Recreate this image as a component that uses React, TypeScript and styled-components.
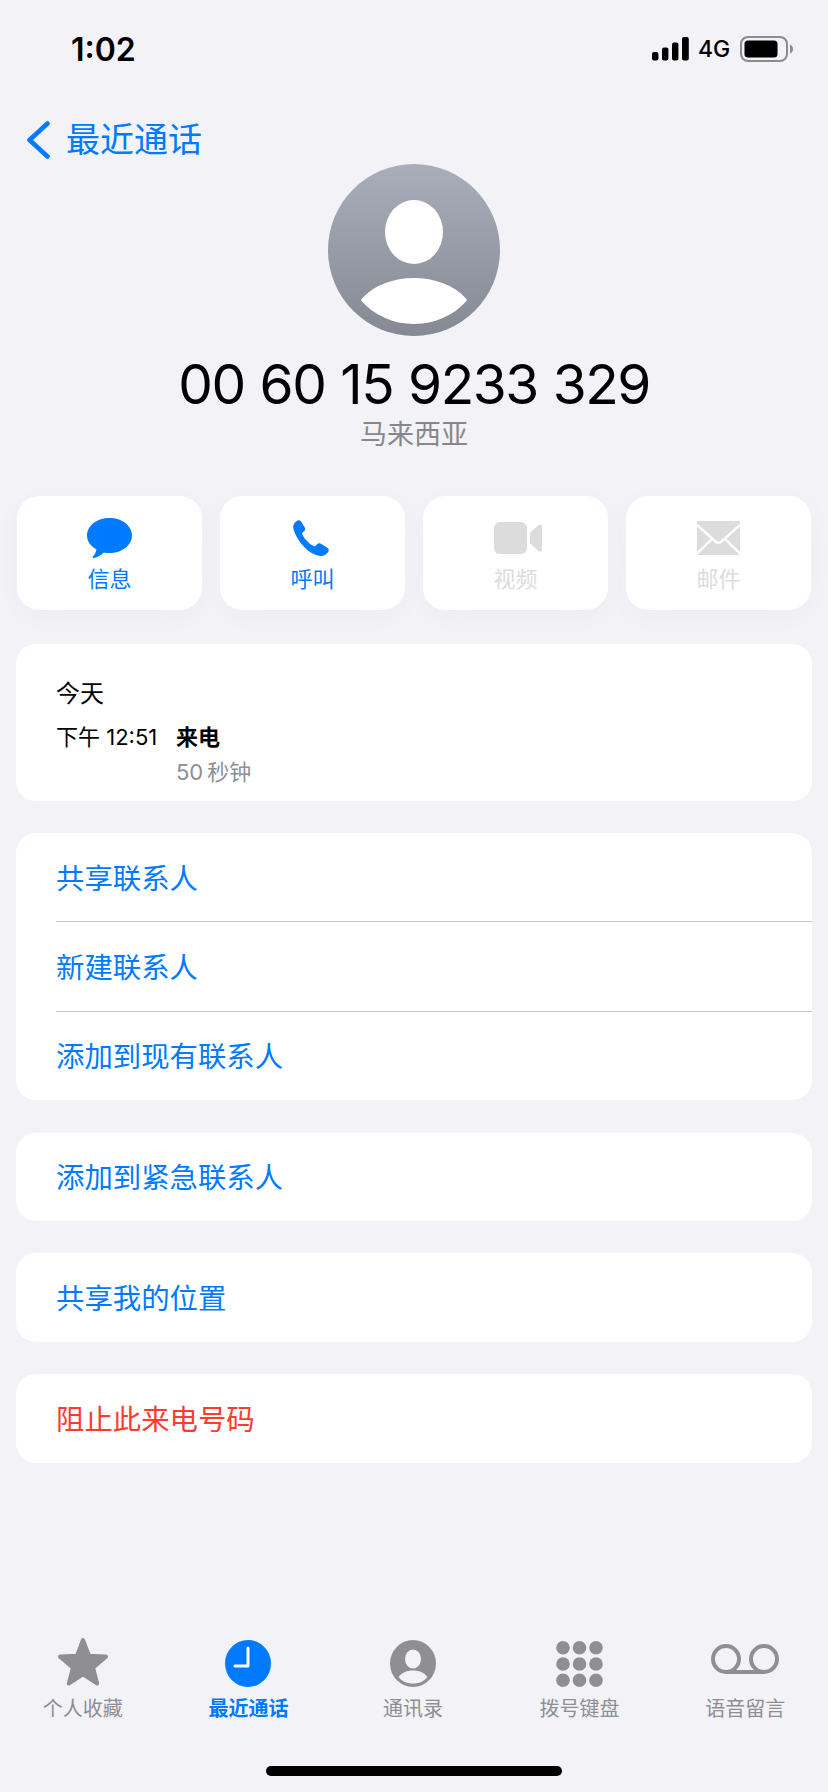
import React from "react";
import styled, { createGlobalStyle } from "styled-components";

const CJK = `Inter, "Noto Sans CJK SC", "Noto Sans", sans-serif`;
const BLUE = "#007aff";
const GREY = "#8e8e93";
const DISABLED = "#dcdcdc";

const Global = createGlobalStyle`
  html, body { margin: 0; padding: 0; background: #f2f2f7; }
  * { box-sizing: border-box; }
`;

const Page = styled.div`
  width: 828px;
  height: 1792px;
  background: #f2f2f7;
  display: flex;
  flex-direction: column;
  font-family: ${CJK};
  overflow: hidden;
`;

const StatusBar = styled.div`
  height: 98px;
  padding: 0 34px 0 71px;
  display: flex;
  align-items: center;
  justify-content: space-between;
`;
const Time = styled.span`
  font-size: 32px;
  font-weight: 600;
  color: #000;
`;
const StatusRight = styled.div`
  display: flex;
  align-items: center;
`;
const NetworkLabel = styled.span`
  width: 32px;
  font-size: 23px;
  font-weight: 500;
  line-height: 26px;
  margin: 0 10px 0 9px;
  color: #000;
`;

const NavBar = styled.div`
  height: 48px;
  margin-top: 18px;
  padding-left: 26px;
  display: flex;
  align-items: center;
  gap: 16px;
`;
const BackLabel = styled.span`
  font-size: 34px;
  line-height: 48px;
  color: ${BLUE};
`;

const Header = styled.div`
  display: flex;
  flex-direction: column;
  align-items: center;
`;
const Number = styled.div`
  margin-top: 14px;
  font-size: 55px;
  line-height: 68px;
  letter-spacing: -1.5px;
  word-spacing: 1px;
  color: #000;
`;
const Region = styled.div`
  font-size: 27px;
  line-height: 34px;
  color: #87878b;
`;

const Actions = styled.div`
  margin-top: 44px;
  padding: 0 17px;
  display: grid;
  grid-template-columns: repeat(4, 185px);
  gap: 18px;
`;
const ActionCard = styled.div<{ $disabled?: boolean }>`
  height: 114px;
  border-radius: 22px;
  background: #fff;
  box-shadow: 0 6px 28px rgba(0, 0, 0, 0.028);
  display: flex;
  flex-direction: column;
  align-items: center;
  color: ${(p) => (p.$disabled ? DISABLED : BLUE)};
`;
const ActionIcon = styled.div<{ $shift?: number }>`
  height: 44px;
  margin-top: 20px;
  margin-left: ${(p) => p.$shift ?? 0}px;
  display: flex;
  align-items: center;
  justify-content: center;
`;
const ActionLabel = styled.span`
  margin-top: 5px;
  font-size: 22px;
  line-height: 28px;
`;

const Card = styled.div<{ $top: number }>`
  margin: ${(p) => p.$top}px 16px 0;
  background: #fff;
  border-radius: 20px;
`;
const CallInfo = styled.div`
  height: 157px;
  padding: 33px 40px 0;
`;
const DayLabel = styled.div`
  font-size: 24px;
  line-height: 34px;
  color: #000;
`;
const CallGrid = styled.div`
  margin-top: 9px;
  display: grid;
  grid-template-columns: 120px 1fr;
  grid-auto-rows: 34px;
  row-gap: 1px;
  font-size: 22px;
  line-height: 34px;
`;
const CallTime = styled.span`
  color: #000;
`;
const CallType = styled.span`
  color: #000;
  font-weight: 700;
`;
const CallDuration = styled.span`
  grid-column: 2;
  color: ${GREY};
`;

const Row = styled.div<{ $danger?: boolean }>`
  height: 88.4px;
  padding: 0 0 2px 40px;
  display: flex;
  align-items: center;
  font-size: 28.4px;
  color: ${(p) => (p.$danger ? "#ff3b30" : BLUE)};
`;
const Divider = styled.div`
  height: 1px;
  margin-left: 40px;
  background: #c6c6c8;
`;

const TabBar = styled.div`
  margin-top: auto;
  display: grid;
  grid-template-columns: repeat(5, 1fr);
`;
const Tab = styled.div<{ $active?: boolean; $shift?: number }>`
  display: flex;
  flex-direction: column;
  align-items: center;
  margin-left: ${(p) => p.$shift ?? 0}px;
  color: ${(p) => (p.$active ? BLUE : GREY)};
`;
const TabIcon = styled.div`
  height: 50px;
  display: flex;
  align-items: flex-end;
  justify-content: center;
`;
const TabLabel = styled.span<{ $active?: boolean }>`
  margin-top: 8px;
  font-size: 20px;
  line-height: 28px;
  font-weight: ${(p) => (p.$active ? 700 : 400)};
`;
const HomeWrap = styled.div`
  height: 69px;
  padding-top: 43px;
  display: flex;
  justify-content: center;
`;
const HomeIndicator = styled.div`
  width: 296px;
  height: 10px;
  border-radius: 5px;
  background: #000;
`;
const VoicemailBox = styled.div`
  padding-bottom: 9px;
`;

const Signal = () => (
  <svg width="37" height="24" viewBox="0 0 37 24">
    <rect x="0" y="15" width="6.4" height="8.5" rx="2" fill="#000" />
    <rect x="10" y="10.5" width="6.4" height="13" rx="2" fill="#000" />
    <rect x="20" y="5.5" width="6.4" height="18" rx="2" fill="#000" />
    <rect x="30" y="0" width="6.8" height="23.5" rx="2" fill="#000" />
  </svg>
);
const Battery = () => (
  <svg width="54" height="26" viewBox="0 0 54 26">
    <rect x="1" y="1" width="46" height="24" rx="7" fill="none" stroke="#8b8b8e" strokeWidth="2" />
    <rect x="4.5" y="4.5" width="33" height="17" rx="3.5" fill="#000" />
    <path d="M50 8.5 C52 9.5 53 11 53 13 C53 15 52 16.5 50 17.5 Z" fill="#8b8b8e" />
  </svg>
);
const Chevron = () => (
  <svg width="24" height="38" viewBox="0 0 24 38">
    <path d="M21.5 2.5 L3.5 19 L21.5 35.5" fill="none" stroke={BLUE} strokeWidth="4.6" strokeLinecap="round" strokeLinejoin="round" />
  </svg>
);
const Avatar = () => (
  <svg width="172" height="172" viewBox="0 0 172 172">
    <defs>
      <linearGradient id="av" x1="0" y1="0" x2="0" y2="1">
        <stop offset="0" stopColor="#a9aeba" />
        <stop offset="1" stopColor="#858994" />
      </linearGradient>
    </defs>
    <circle cx="86" cy="86" r="86" fill="url(#av)" />
    <ellipse cx="86" cy="68" rx="29" ry="32" fill="#fff" />
    <path d="M34 137.5 C33 136.5 33 135.5 34 134.5 C46 121 66 114 86 114 C106 114 126 121 138 134.5 C139 135.5 139 136.5 138 137.5 C126 151 107 160 86 160 C65 160 46 151 34 137.5 Z" fill="#fff" />
  </svg>
);
const Bubble = () => (
  <svg width="45" height="40" viewBox="0 0 45 40">
    <path d="M22.5 0 C35 0 45 7.8 45 17.5 C45 27.2 35 35 22.5 35 C20.5 35 18.6 34.8 16.8 34.4 C13.5 37.5 9.5 39.6 6.6 40 C5.6 40.1 5.2 39.3 5.9 38.6 C7.8 36.5 9.2 33.6 9.4 31.4 C3.7 28.2 0 23.2 0 17.5 C0 7.8 10 0 22.5 0 Z" fill="currentColor" />
  </svg>
);
const Phone = () => (
  <svg width="36" height="36" viewBox="0 0 36 36">
    <path d="M3.5 1.2 C5 0 7 0 8 1.5 L11.5 7 C12.6 8.8 12.2 10.5 10.8 11.6 L9.6 12.6 C9 13.1 9 13.9 9.4 14.7 C11.5 18.8 16 23.8 20.5 26 C21.4 26.4 22 26.3 22.6 25.7 L23.8 24.4 C25 23.1 26.8 22.8 28.4 23.9 L34.4 27.8 C36 28.9 36.2 30.6 35 32.2 C33.2 34.7 30.6 36 27.8 35.9 C20 35.6 12 29 7 22 C3 16.4 0 9.8 0.2 6.5 C0.3 4.4 1.6 2.6 3.5 1.2 Z" fill="currentColor" />
  </svg>
);
const Video = () => (
  <svg width="48" height="32" viewBox="0 0 48 32">
    <rect x="0" y="0" width="33" height="32" rx="6" fill="currentColor" />
    <path d="M36 12 C36 11 36.4 10.3 37 9.7 L44.6 3 C46 1.9 48 2.6 48 4.6 L48 27.4 C48 29.4 46 30.1 44.6 29 L37 22.3 C36.4 21.7 36 21 36 20 Z" fill="currentColor" />
  </svg>
);
const Mail = () => (
  <svg width="43" height="34" viewBox="0 0 43 34">
    <rect x="0" y="0" width="43" height="34" rx="1.5" fill="currentColor" />
    <path d="M0 4 L18.5 20.5 C20.2 22 22.8 22 24.5 20.5 L43 4" fill="none" stroke="#fff" strokeWidth="2.4" />
    <path d="M-1 33.5 L15.5 17.5 M44 33.5 L27.5 17.5" fill="none" stroke="#fff" strokeWidth="2.4" />
  </svg>
);
const Star = () => (
  <svg width="52" height="50" viewBox="0 0 52 50">
    <path d="M26 3 L32 18.8 L49 19.6 L36 30.6 L40.2 46.5 L26 37.4 L11.8 46.5 L16 30.6 L3 19.6 L20 18.8 Z" fill="currentColor" stroke="currentColor" strokeWidth="4" strokeLinejoin="round" />
  </svg>
);
const Clock = () => (
  <svg width="46" height="47" viewBox="0 0 46 47">
    <ellipse cx="23" cy="23.5" rx="23" ry="23.5" fill="currentColor" />
    <path d="M23 8 L23 26 L10 26" fill="none" stroke="#fff" strokeWidth="3" strokeLinecap="round" strokeLinejoin="round" />
  </svg>
);
const Contact = () => (
  <svg width="46" height="47" viewBox="0 0 46 47">
    <ellipse cx="23" cy="23.5" rx="23" ry="23.5" fill="currentColor" />
    <ellipse cx="23" cy="19" rx="8" ry="9.5" fill="#f2f2f7" />
    <path d="M8.5 37 C12 32.5 17 30.5 23 30.5 C29 30.5 34 32.5 37.5 37 C34 41.5 29 43.5 23 43.5 C17 43.5 12 41.5 8.5 37 Z" fill="#f2f2f7" />
  </svg>
);
const Keypad = () => (
  <svg width="47" height="46" viewBox="0 0 47 46">
    {[6.8, 23, 39.2].map((cy) =>
      [7, 23.5, 40].map((cx) => <circle key={`${cx}-${cy}`} cx={cx} cy={cy} r="6.8" fill="currentColor" />)
    )}
  </svg>
);
const Voicemail = () => (
  <svg width="68" height="30" viewBox="0 0 68 30">
    <circle cx="15" cy="15" r="13" fill="none" stroke="currentColor" strokeWidth="4" />
    <circle cx="53" cy="15" r="13" fill="none" stroke="currentColor" strokeWidth="4" />
    <path d="M15 28 L53 28" fill="none" stroke="currentColor" strokeWidth="4" />
  </svg>
);

export default function App() {
  return (
    <Page>
      <Global />
      <StatusBar>
        <Time>1:02</Time>
        <StatusRight>
          <Signal />
          <NetworkLabel>4G</NetworkLabel>
          <Battery />
        </StatusRight>
      </StatusBar>
      <NavBar>
        <Chevron />
        <BackLabel>最近通话</BackLabel>
      </NavBar>
      <Header>
        <Avatar />
        <Number>00 60 15 9233 329</Number>
        <Region>马来西亚</Region>
      </Header>
      <Actions>
        <ActionCard>
          <ActionIcon><Bubble /></ActionIcon>
          <ActionLabel>信息</ActionLabel>
        </ActionCard>
        <ActionCard>
          <ActionIcon $shift={-3}><Phone /></ActionIcon>
          <ActionLabel>呼叫</ActionLabel>
        </ActionCard>
        <ActionCard $disabled>
          <ActionIcon $shift={5}><Video /></ActionIcon>
          <ActionLabel>视频</ActionLabel>
        </ActionCard>
        <ActionCard $disabled>
          <ActionIcon><Mail /></ActionIcon>
          <ActionLabel>邮件</ActionLabel>
        </ActionCard>
      </Actions>
      <Card $top={34}>
        <CallInfo>
          <DayLabel>今天</DayLabel>
          <CallGrid>
            <CallTime>下午 12:51</CallTime>
            <CallType>来电</CallType>
            <CallDuration>{"50\u2009秒钟"}</CallDuration>
          </CallGrid>
        </CallInfo>
      </Card>
      <Card $top={32}>
        <Row>共享联系人</Row>
        <Divider />
        <Row>新建联系人</Row>
        <Divider />
        <Row>添加到现有联系人</Row>
      </Card>
      <Card $top={32.4}>
        <Row>添加到紧急联系人</Row>
      </Card>
      <Card $top={32.4}>
        <Row>共享我的位置</Row>
      </Card>
      <Card $top={32.4}>
        <Row $danger>阻止此来电号码</Row>
      </Card>
      <TabBar>
        <Tab>
          <TabIcon><Star /></TabIcon>
          <TabLabel>个人收藏</TabLabel>
        </Tab>
        <Tab $active>
          <TabIcon><Clock /></TabIcon>
          <TabLabel $active>最近通话</TabLabel>
        </Tab>
        <Tab $shift={-2}>
          <TabIcon><Contact /></TabIcon>
          <TabLabel>通讯录</TabLabel>
        </Tab>
        <Tab>
          <TabIcon><Keypad /></TabIcon>
          <TabLabel>拨号键盘</TabLabel>
        </Tab>
        <Tab>
          <TabIcon><VoicemailBox><Voicemail /></VoicemailBox></TabIcon>
          <TabLabel>语音留言</TabLabel>
        </Tab>
      </TabBar>
      <HomeWrap>
        <HomeIndicator />
      </HomeWrap>
    </Page>
  );
}
